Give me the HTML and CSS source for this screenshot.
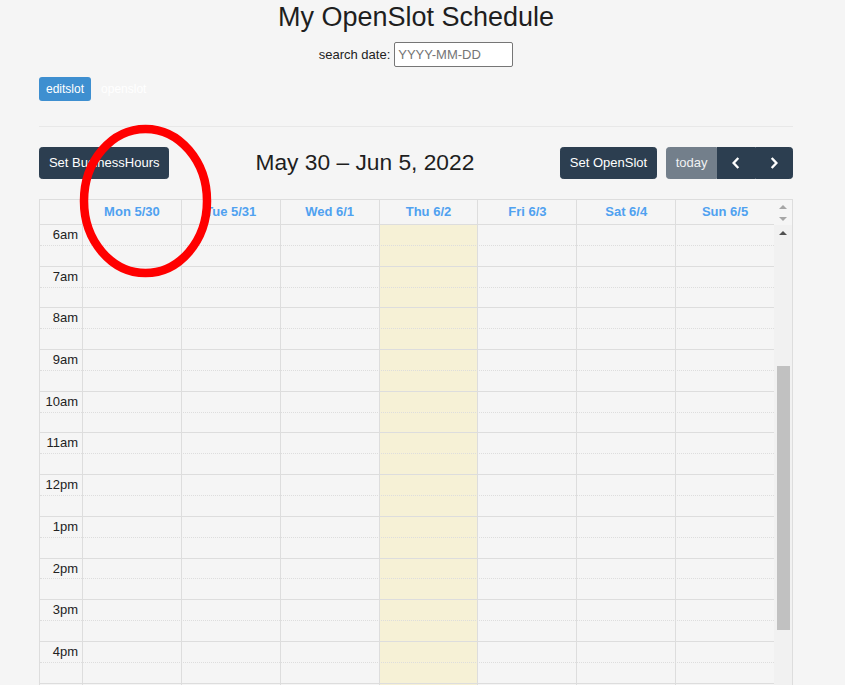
FILE: index.html
```html
<!DOCTYPE html>
<html lang="en">
<head>
<meta charset="utf-8">
<title>My OpenSlot Schedule</title>
<link rel="stylesheet" href="styles.css">
</head>
<body>
<div class="page">
  <h1 class="title">My OpenSlot Schedule</h1>
  <div class="search">
    <label class="search-label" for="sd">search date:</label>
    <input id="sd" class="search-input" type="text" placeholder="YYYY-MM-DD">
  </div>
  <div class="tabs">
    <button class="tab tab-active">editslot</button>
    <button class="tab">openslot</button>
  </div>
  <hr class="divider">

  <div class="toolbar">
    <div class="tb-chunk">
      <button class="fc-btn fc-btn-wide">Set BusinessHours</button>
    </div>
    <h2 class="tb-title">May 30 – Jun 5, 2022</h2>
    <div class="tb-chunk">
      <button class="fc-btn">Set OpenSlot</button>
      <div class="btn-group">
        <button class="fc-btn fc-btn-disabled g-first">today</button>
        <button class="fc-btn g-mid icon-btn" aria-label="prev"><svg class="chev" viewBox="0 0 8 12" width="8" height="12"><path d="M6.3 1 L1.6 6 L6.3 11" /></svg></button>
        <button class="fc-btn g-last icon-btn" aria-label="next"><svg class="chev" viewBox="0 0 8 12" width="8" height="12"><path d="M1.7 1 L6.4 6 L1.7 11" /></svg></button>
      </div>
    </div>
  </div>

  <div class="cal">
    <div class="cal-head">
      <div class="axis-h"></div>
      <div class="dh">Mon 5/30</div>
      <div class="dh">Tue 5/31</div>
      <div class="dh">Wed 6/1</div>
      <div class="dh">Thu 6/2</div>
      <div class="dh">Fri 6/3</div>
      <div class="dh">Sat 6/4</div>
      <div class="dh">Sun 6/5</div>
      <div class="sb-head">
        <svg class="tri" viewBox="0 0 8 4" width="8" height="4"><path d="M0 4 L4 0 L8 4 Z" /></svg>
        <svg class="tri" viewBox="0 0 8 4" width="8" height="4"><path d="M0 0 L4 4 L8 0 Z" /></svg>
      </div>
    </div>
    <div class="cal-body">
      <div class="grid-wrap">
        <div class="cols">
          <div class="col-axis"></div>
          <div class="col"></div>
          <div class="col"></div>
          <div class="col"></div>
          <div class="col col-today"></div>
          <div class="col"></div>
          <div class="col"></div>
          <div class="col"></div>
        </div>
        <div class="slots">
          <div class="slot half"><span class="lbl">6am</span></div><div class="slot full"></div>
          <div class="slot half"><span class="lbl">7am</span></div><div class="slot full"></div>
          <div class="slot half"><span class="lbl">8am</span></div><div class="slot full"></div>
          <div class="slot half"><span class="lbl">9am</span></div><div class="slot full"></div>
          <div class="slot half"><span class="lbl">10am</span></div><div class="slot full"></div>
          <div class="slot half"><span class="lbl">11am</span></div><div class="slot full"></div>
          <div class="slot half"><span class="lbl">12pm</span></div><div class="slot full"></div>
          <div class="slot half"><span class="lbl">1pm</span></div><div class="slot full"></div>
          <div class="slot half"><span class="lbl">2pm</span></div><div class="slot full"></div>
          <div class="slot half"><span class="lbl">3pm</span></div><div class="slot full"></div>
          <div class="slot half"><span class="lbl">4pm</span></div><div class="slot full"></div>
          <div class="slot half"></div><div class="slot full"></div>
        </div>
      </div>
      <div class="sb-track">
        <svg class="tri tri-dark" viewBox="0 0 8 4" width="8" height="4"><path d="M0 4 L4 0 L8 4 Z" /></svg>
        <div class="sb-thumb"></div>
      </div>
    </div>
  </div>
</div>
<svg class="mark" width="134" height="156" viewBox="0 0 134 156"><ellipse cx="66.5" cy="77" rx="61.5" ry="72" /></svg>
</body>
</html>
```

FILE: styles.css
```css
html, body {
  margin: 0;
  padding: 0;
  height: 685px;
  overflow: hidden;
  background: #f5f5f5;
}
body {
  font-family: "Liberation Sans", Arial, sans-serif;
  color: #222;
}
.page {
  padding-left: 39px;
  width: 754px;
}
.title {
  margin: 2px 0 0;
  font-size: 27px;
  line-height: 31px;
  font-weight: normal;
  text-align: center;
  color: #1e1e1e;
}
.search {
  margin-top: 9px;
  display: flex;
  justify-content: center;
  align-items: center;
  gap: 4px;
  font-size: 13px;
}
.search-label {
  line-height: 15px;
  color: #222;
}
.search-input {
  box-sizing: border-box;
  width: 119px;
  height: 25px;
  margin: 0;
  padding: 1px 3px;
  border: 1px solid #767676;
  border-radius: 2px;
  background: #fff;
  font-family: "Liberation Sans", Arial, sans-serif;
  font-size: 13px;
  color: #222;
}
.search-input::placeholder {
  color: #757575;
}
.tabs {
  margin-top: 10px;
  display: flex;
  gap: 3px;
  height: 24px;
}
.tab {
  height: 24px;
  margin: 0;
  padding: 0 7px;
  border: 0;
  border-radius: 3px;
  background: transparent;
  color: #fff;
  font-family: "Liberation Sans", Arial, sans-serif;
  font-size: 12px;
  line-height: 14px;
}
.tab-active {
  background: #3e8fd0;
}
.divider {
  margin: 25px 0 0;
  border: 0;
  height: 1px;
  background: #e8e8e8;
}
.toolbar {
  margin-top: 20px;
  display: flex;
  justify-content: space-between;
  align-items: center;
  height: 32px;
}
.tb-chunk {
  display: flex;
  align-items: center;
}
.tb-title {
  margin: 0 0 2px;
  font-size: 22.75px;
  line-height: 26px;
  font-weight: normal;
  color: #1e1e1e;
}
.fc-btn {
  box-sizing: border-box;
  height: 32px;
  margin: 0;
  padding: 0 8.45px;
  border: 1px solid #2c3e50;
  border-radius: 3.25px;
  background: #2c3e50;
  color: #fff;
  font-family: "Liberation Sans", Arial, sans-serif;
  font-size: 13px;
  line-height: 19.5px;
}
.fc-btn-wide {
  padding: 0 8.95px;
}
.btn-group {
  display: flex;
  margin-left: 9.75px;
}
.fc-btn-disabled {
  background: #737f8b;
  border-color: #737f8b;
  color: #f0f1f2;
}
.g-first {
  border-top-right-radius: 0;
  border-bottom-right-radius: 0;
}
.g-mid {
  border-radius: 0;
}
.g-last {
  border-top-left-radius: 0;
  border-bottom-left-radius: 0;
}
.icon-btn {
  width: 38px;
  display: flex;
  align-items: center;
  justify-content: center;
  padding: 0;
}
.chev {
  display: block;
}
.chev path {
  fill: none;
  stroke: #fff;
  stroke-width: 2.4;
  stroke-linejoin: miter;
  stroke-linecap: butt;
}

/* calendar */
.cal {
  margin-top: 20px;
  box-sizing: border-box;
  width: 754px;
  border: 1px solid #ddd;
  border-bottom: 0;
}
.cal-head {
  display: grid;
  grid-template-columns: 42px repeat(7, 1fr) 18px;
  height: 25px;
}
.axis-h {
  border-bottom: 1px solid #ddd;
}
.dh {
  box-sizing: border-box;
  height: 25px;
  padding: 2px 4px;
  border-left: 1px solid #ddd;
  border-bottom: 1px solid #ddd;
  text-align: center;
  font-size: 13px;
  line-height: 19.5px;
  font-weight: bold;
  color: #4fa1f0;
}
.sb-head {
  display: flex;
  flex-direction: column;
  align-items: center;
  padding-top: 5px;
  gap: 8px;
}
.tri {
  display: block;
}
.tri path {
  fill: #a6a6a6;
}
.tri-dark path {
  fill: #505050;
}
.cal-body {
  display: grid;
  grid-template-columns: 1fr 18px;
  height: 470px;
}
.grid-wrap {
  display: grid;
}
.cols, .slots {
  grid-area: 1 / 1;
}
.cols {
  display: grid;
  grid-template-columns: 42px repeat(7, 1fr);
}
.col {
  border-left: 1px solid #ddd;
}
.col-today {
  background: rgba(255, 220, 40, 0.15);
}
.slot {
  box-sizing: border-box;
  height: 20.85px;
}
.half {
  border-bottom: 1px dotted #ddd;
}
.full {
  border-bottom: 1px solid #ddd;
}
.lbl {
  display: block;
  width: 42px;
  box-sizing: border-box;
  padding-right: 4px;
  text-align: right;
  font-size: 13px;
  line-height: 19px;
  color: #222;
}
.sb-track {
  background: #f1f1f1;
  display: flex;
  flex-direction: column;
  align-items: center;
}
.sb-track .tri {
  margin-top: 6px;
}
.sb-thumb {
  align-self: flex-start;
  margin-left: 3px;
  margin-top: 131px;
  width: 13px;
  height: 264px;
  background: #c1c1c1;
}

.mark {
  position: absolute;
  left: 79px;
  top: 124px;
}
.mark ellipse {
  fill: none;
  stroke: #ff0000;
  stroke-width: 8.5;
}
```
